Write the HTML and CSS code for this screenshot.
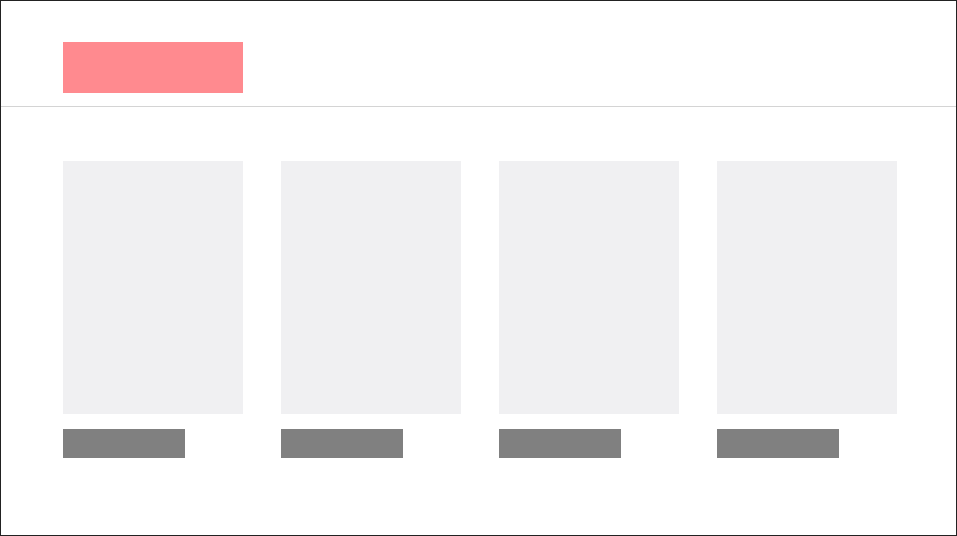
FILE: index.html
```html
<!DOCTYPE html>
<html>
<head>
<meta charset="utf-8">
<link rel="stylesheet" href="styles.css">
</head>
<body>
<div class="frame">
  <header class="header">
    <div class="logo"></div>
  </header>
  <main class="grid">
    <div class="item"><div class="thumb"></div><div class="label"></div></div>
    <div class="item"><div class="thumb"></div><div class="label"></div></div>
    <div class="item"><div class="thumb"></div><div class="label"></div></div>
    <div class="item"><div class="thumb"></div><div class="label"></div></div>
  </main>
</div>
</body>
</html>
```
FILE: styles.css
```css
html, body {
  margin: 0;
  padding: 0;
  background: #ffffff;
  font-family: "Liberation Sans", Arial, sans-serif;
}
.frame {
  box-sizing: border-box;
  width: 957px;
  height: 536px;
  border: 1px solid #222222;
  background: #ffffff;
  overflow: hidden;
}
.header {
  box-sizing: border-box;
  height: 106px;
  padding: 41px 0 0 62px;
  border-bottom: 1px solid #d4d4d4;
}
.logo {
  width: 180px;
  height: 51px;
  background: #ff8a8f;
}
.grid {
  display: flex;
  gap: 38px;
  padding: 54px 0 0 62px;
}
.item {
  display: flex;
  flex-direction: column;
  width: 180px;
}
.thumb {
  height: 253px;
  background: #f0f0f2;
}
.label {
  margin-top: 15px;
  width: 122px;
  height: 29px;
  background: #808080;
}
```
